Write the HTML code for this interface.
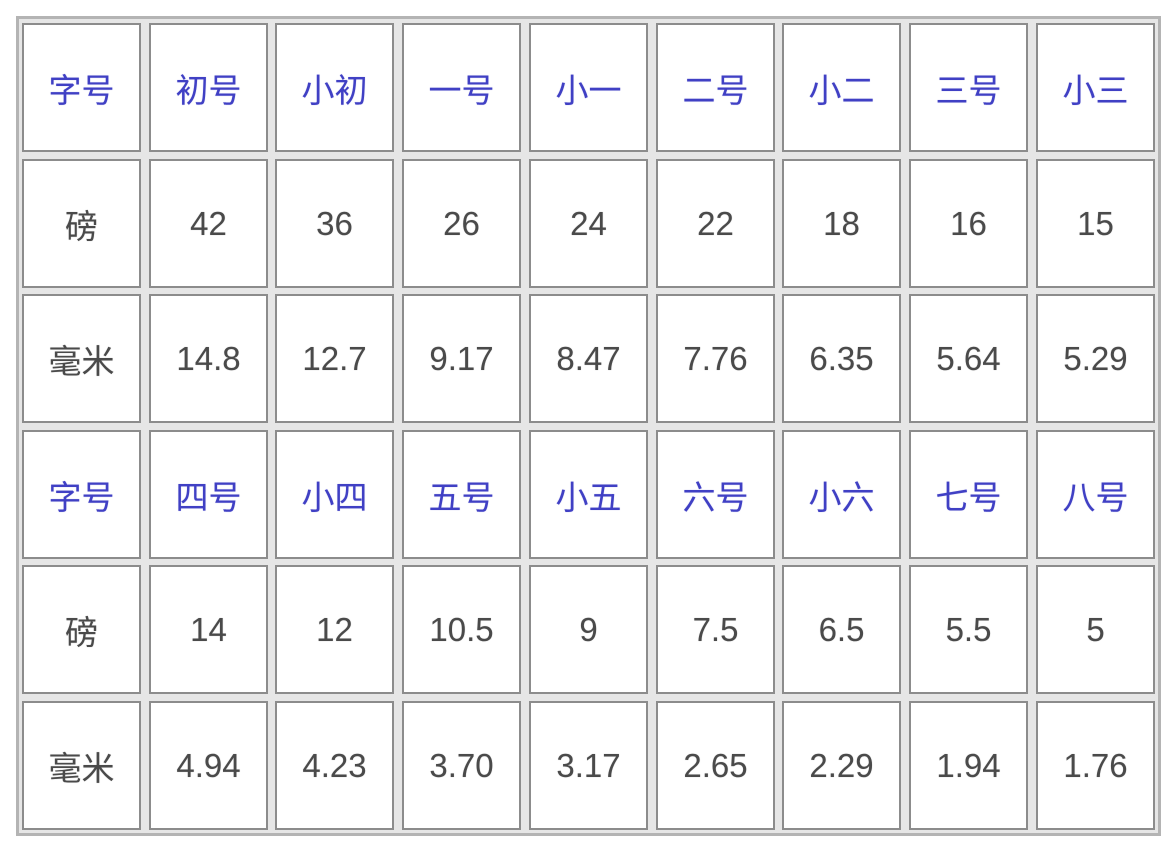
<!DOCTYPE html>
<html><head><meta charset="utf-8"><style>
body{margin:0;width:1175px;height:848px;background:#fff;position:relative;overflow:hidden;font-family:"Liberation Sans","Noto Sans CJK SC",sans-serif}
.t{position:absolute;left:16px;top:16px;width:1139px;height:814px;border:3px solid #b4b4b4;background:#e6e6e6}
.c{position:absolute;width:115px;height:125px;border:2px solid #8c8c8c;background:#fff;display:flex;align-items:center;justify-content:center;font-size:33px;color:#4a4a4a;text-shadow:0 0 1px rgba(0,0,0,0.25)}
.b{color:#4040c4;text-shadow:0 0 1px rgba(40,40,200,0.3)}
</style></head><body><div class="t"></div>
<script>
var rows=[["字号","初号","小初","一号","小一","二号","小二","三号","小三"],["磅","42","36","26","24","22","18","16","15"],["毫米","14.8","12.7","9.17","8.47","7.76","6.35","5.64","5.29"],["字号","四号","小四","五号","小五","六号","小六","七号","八号"],["磅","14","12","10.5","9","7.5","6.5","5.5","5"],["毫米","4.94","4.23","3.70","3.17","2.65","2.29","1.94","1.76"]];
var h="";rows.forEach(function(r,j){r.forEach(function(t,i){h+='<div class="c'+((j==0||j==3)?' b':'')+'" style="left:'+Math.round(22+126.7*i)+'px;top:'+Math.round(23+135.5*j)+'px">'+t+'</div>';});});
document.body.insertAdjacentHTML("beforeend",h);
</script></body></html>
